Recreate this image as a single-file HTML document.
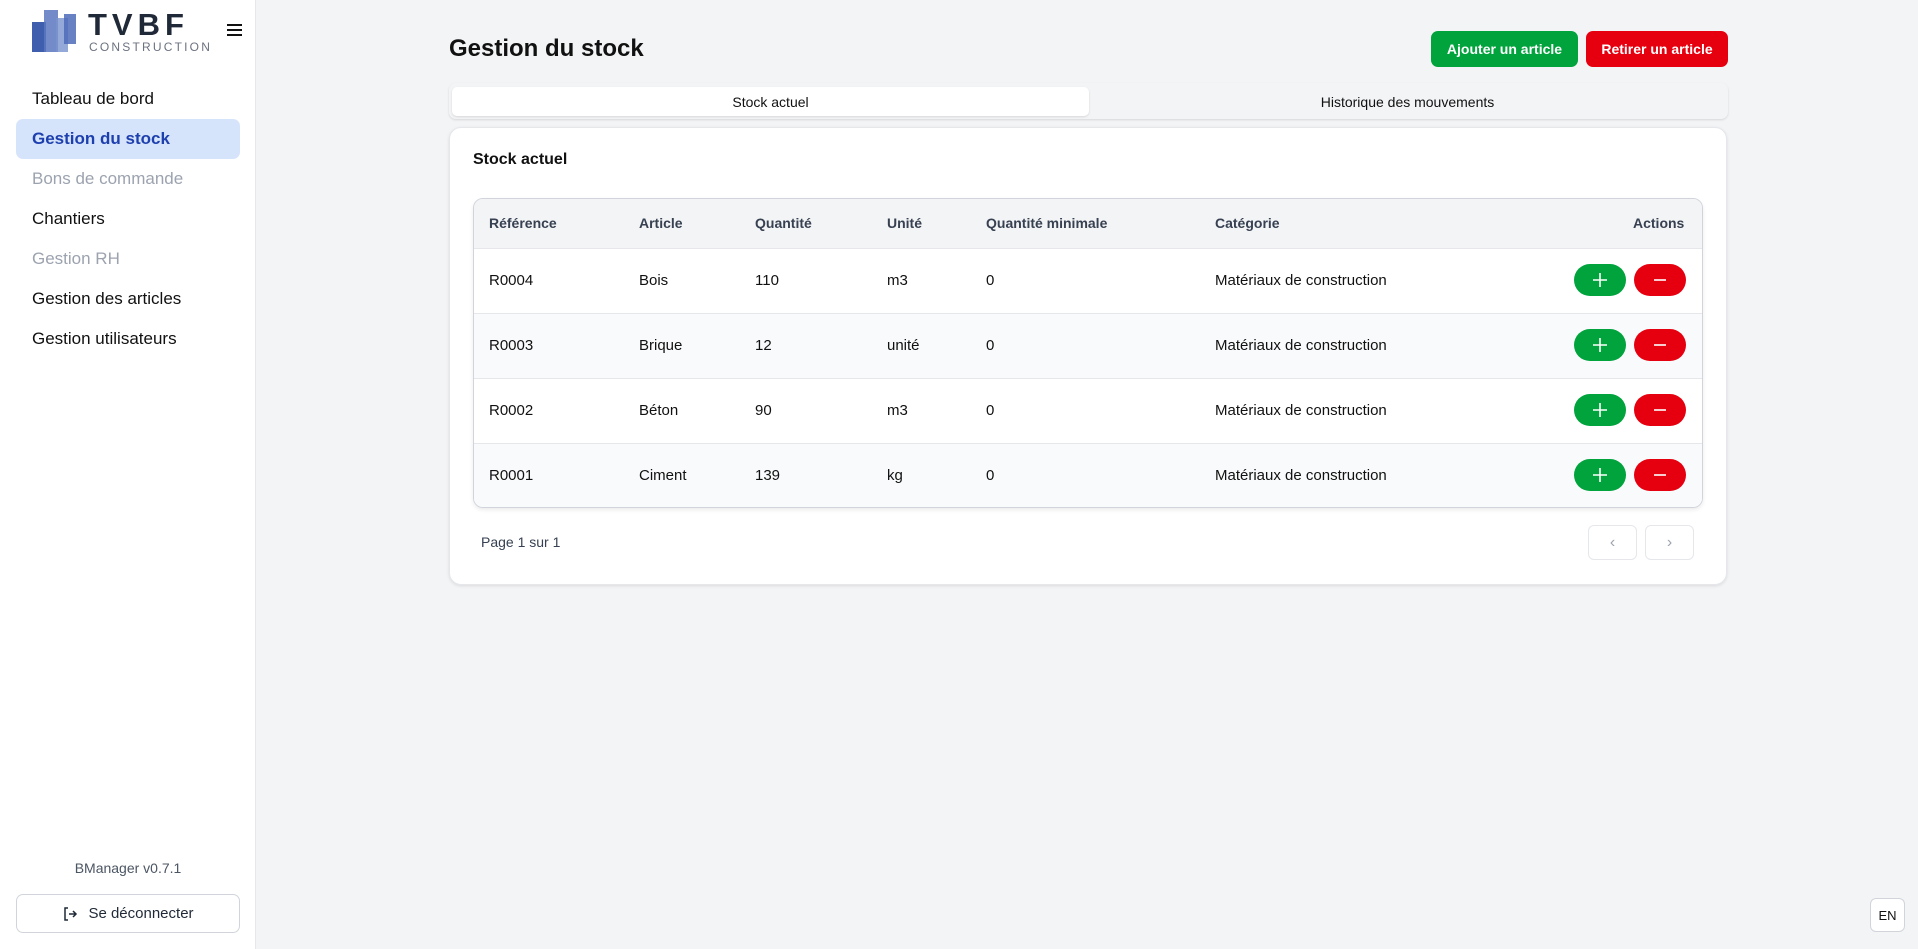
<!DOCTYPE html>
<html><head><meta charset="utf-8"><style>
*{box-sizing:border-box;margin:0;padding:0}
body{width:1918px;height:949px;background:#f3f4f6;font-family:"Liberation Sans",sans-serif;position:relative;overflow:hidden;color:#111}
.abs{position:absolute}
#side{left:0;top:0;width:256px;height:949px;background:#fff;border-right:1px solid #e5e7eb}
.nav{position:absolute;left:32px;font-size:17px;color:#111}
.btn{position:absolute;border-radius:7px;color:#fff;font-size:14px;font-weight:bold;display:flex;align-items:center;justify-content:center}
.th,.td{position:absolute}
.th{font-weight:bold;color:#374151;font-size:14px}
.td{font-size:15px}
.pb{position:absolute;width:52px;height:32px;border-radius:16px;display:flex;align-items:center;justify-content:center}
.g{background:#00a33c}.r{background:#e6000f}
</style></head><body>
<div id="side" class="abs">
  <svg class="abs" style="left:30px;top:8px" width="50" height="46" viewBox="0 0 50 46">
    <rect x="2" y="14" width="14" height="30" fill="#3f5fae"/>
    <rect x="14" y="2" width="14" height="42" fill="#5b78c0" opacity=".85"/>
    <rect x="26" y="10" width="12" height="34" fill="#7a93cf" opacity=".8"/>
    <rect x="34" y="6" width="12" height="30" fill="#4e6bb8" opacity=".85"/>
  </svg>
  <div class="abs" style="left:88px;top:7px;font-size:31px;font-weight:bold;letter-spacing:5px;color:#1f2937">TVBF</div>
  <div class="abs" style="left:89px;top:40px;font-size:12px;letter-spacing:2.2px;color:#6b7280">CONSTRUCTION</div>
  <div class="abs" style="left:227px;top:24px;width:15px">
    <div style="height:2px;background:#111;margin-bottom:3px"></div><div style="height:2px;background:#111;margin-bottom:3px"></div><div style="height:2px;background:#111"></div></div>
  <div class="abs" style="left:16px;top:119px;width:224px;height:40px;background:#d6e4fb;border-radius:7px"></div>
  <div class="nav" style="top:89px">Tableau de bord</div>
  <div class="nav" style="top:129px;color:#1e40af;font-weight:bold">Gestion du stock</div>
  <div class="nav" style="top:169px;color:#9ca3af">Bons de commande</div>
  <div class="nav" style="top:209px">Chantiers</div>
  <div class="nav" style="top:249px;color:#9ca3af">Gestion RH</div>
  <div class="nav" style="top:289px">Gestion des articles</div>
  <div class="nav" style="top:329px">Gestion utilisateurs</div>
  <div class="abs" style="left:0;width:256px;text-align:center;top:860px;font-size:14px;color:#4b5563">BManager v0.7.1</div>
  <div class="abs" style="left:16px;top:894px;width:224px;height:39px;border:1px solid #d1d5db;border-radius:7px;display:flex;align-items:center;justify-content:center;font-size:15px;color:#1f2937">
    <svg width="16" height="16" viewBox="0 0 16 16" style="margin-right:10px" fill="none" stroke="#1f2937" stroke-width="1.5"><path d="M6 2H3v12h3M7 8h7M11 5l3 3-3 3"/></svg>Se déconnecter</div>
</div>
<div class="abs" style="left:449px;top:35px;font-size:24px;font-weight:bold">Gestion du stock</div>
<div class="btn" style="left:1431px;top:31px;width:147px;height:36px;background:#00a33c">Ajouter un article</div>
<div class="btn" style="left:1586px;top:31px;width:142px;height:36px;background:#e6000f">Retirer un article</div>
<div class="abs" style="left:449px;top:83px;width:1279px;height:36px;background:#f3f4f6;border-radius:7px;box-shadow:0 1px 2px rgba(0,0,0,.12)"></div>
<div class="abs" style="left:452px;top:87px;width:637px;height:29px;background:#fff;border-radius:5px;box-shadow:0 1px 2px rgba(0,0,0,.12);display:flex;align-items:center;justify-content:center;font-size:14px">Stock actuel</div>
<div class="abs" style="left:1089px;top:87px;width:637px;height:29px;display:flex;align-items:center;justify-content:center;font-size:14px">Historique des mouvements</div>
<div class="abs" style="left:449px;top:127px;width:1278px;height:458px;background:#fff;border:1px solid #e5e7eb;border-radius:12px;box-shadow:0 1px 3px rgba(0,0,0,.1)"></div>
<div class="abs" style="left:473px;top:151px;font-size:16px;font-weight:bold">Stock actuel</div>
<div class="abs" style="left:473px;top:198px;width:1230px;height:310px;border:1px solid #d1d5db;border-radius:10px;overflow:hidden;box-shadow:0 2px 4px rgba(0,0,0,.08)">
  <div style="height:50px;background:#f3f4f6;border-bottom:1px solid #e5e7eb"></div>
  <div style="height:65px;background:#fff;border-bottom:1px solid #e5e7eb"></div>
  <div style="height:65px;background:#f9fafb;border-bottom:1px solid #e5e7eb"></div>
  <div style="height:65px;background:#fff;border-bottom:1px solid #e5e7eb"></div>
  <div style="height:65px;background:#f9fafb"></div>
</div>
<div class="th" style="left:489px;top:215px">Référence</div>
<div class="th" style="left:639px;top:215px">Article</div>
<div class="th" style="left:755px;top:215px">Quantité</div>
<div class="th" style="left:887px;top:215px">Unité</div>
<div class="th" style="left:986px;top:215px">Quantité minimale</div>
<div class="th" style="left:1215px;top:215px">Catégorie</div>
<div class="th" style="left:1633px;top:215px">Actions</div>
<div class="td" style="left:489px;top:272px">R0004</div><div class="td" style="left:639px;top:272px">Bois</div><div class="td" style="left:755px;top:272px">110</div><div class="td" style="left:887px;top:272px">m3</div><div class="td" style="left:986px;top:272px">0</div><div class="td" style="left:1215px;top:272px">Matériaux de construction</div>
<div class="td" style="left:489px;top:337px">R0003</div><div class="td" style="left:639px;top:337px">Brique</div><div class="td" style="left:755px;top:337px">12</div><div class="td" style="left:887px;top:337px">unité</div><div class="td" style="left:986px;top:337px">0</div><div class="td" style="left:1215px;top:337px">Matériaux de construction</div>
<div class="td" style="left:489px;top:402px">R0002</div><div class="td" style="left:639px;top:402px">Béton</div><div class="td" style="left:755px;top:402px">90</div><div class="td" style="left:887px;top:402px">m3</div><div class="td" style="left:986px;top:402px">0</div><div class="td" style="left:1215px;top:402px">Matériaux de construction</div>
<div class="td" style="left:489px;top:467px">R0001</div><div class="td" style="left:639px;top:467px">Ciment</div><div class="td" style="left:755px;top:467px">139</div><div class="td" style="left:887px;top:467px">kg</div><div class="td" style="left:986px;top:467px">0</div><div class="td" style="left:1215px;top:467px">Matériaux de construction</div>
<div class="pb g" style="left:1574px;top:264px"><svg width="16" height="16"><path d="M8 1v14M1 8h14" stroke="#fff" stroke-width="1.6"/></svg></div><div class="pb r" style="left:1634px;top:264px"><svg width="16" height="16"><path d="M2 8h12" stroke="#fff" stroke-width="1.6"/></svg></div>
<div class="pb g" style="left:1574px;top:329px"><svg width="16" height="16"><path d="M8 1v14M1 8h14" stroke="#fff" stroke-width="1.6"/></svg></div><div class="pb r" style="left:1634px;top:329px"><svg width="16" height="16"><path d="M2 8h12" stroke="#fff" stroke-width="1.6"/></svg></div>
<div class="pb g" style="left:1574px;top:394px"><svg width="16" height="16"><path d="M8 1v14M1 8h14" stroke="#fff" stroke-width="1.6"/></svg></div><div class="pb r" style="left:1634px;top:394px"><svg width="16" height="16"><path d="M2 8h12" stroke="#fff" stroke-width="1.6"/></svg></div>
<div class="pb g" style="left:1574px;top:459px"><svg width="16" height="16"><path d="M8 1v14M1 8h14" stroke="#fff" stroke-width="1.6"/></svg></div><div class="pb r" style="left:1634px;top:459px"><svg width="16" height="16"><path d="M2 8h12" stroke="#fff" stroke-width="1.6"/></svg></div>
<div class="abs" style="left:481px;top:534px;font-size:14px;color:#374151">Page 1 sur 1</div>
<div class="abs" style="left:1588px;top:525px;width:49px;height:35px;border:1px solid #e5e7eb;border-radius:6px;display:flex;align-items:center;justify-content:center;color:#9ca3af">‹</div>
<div class="abs" style="left:1645px;top:525px;width:49px;height:35px;border:1px solid #e5e7eb;border-radius:6px;display:flex;align-items:center;justify-content:center;color:#9ca3af">›</div>
<div class="abs" style="left:1870px;top:898px;width:35px;height:34px;background:#fff;border:1px solid #d1d5db;border-radius:6px;display:flex;align-items:center;justify-content:center;font-size:13px">EN</div>
</body></html>
